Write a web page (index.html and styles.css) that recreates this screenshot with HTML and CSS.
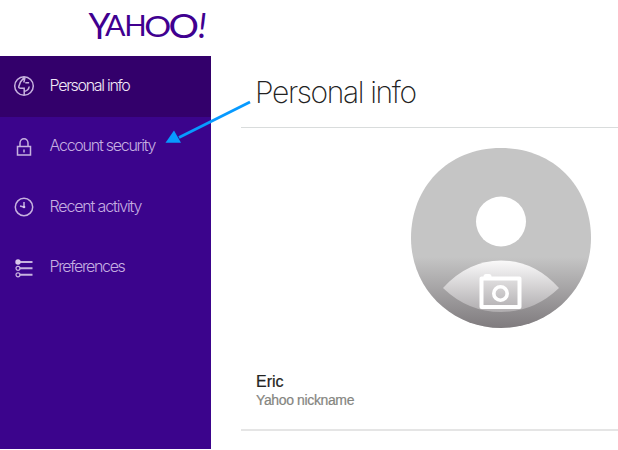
FILE: index.html
```html
<!DOCTYPE html>
<html lang="en">
<head>
<meta charset="utf-8">
<title>Personal info</title>
<link rel="stylesheet" href="styles.css">
</head>
<body>
<header class="header">
  <svg class="logo" viewBox="0 0 124 40" role="img" aria-label="Yahoo!">
    <text><tspan x="6.500" y="32.500" font-size="36" textLength="22" lengthAdjust="spacingAndGlyphs">Y</tspan><tspan x="23" y="30" font-size="29" textLength="20.500" lengthAdjust="spacingAndGlyphs">A</tspan><tspan x="42.300" y="30" font-size="29" textLength="22.500" lengthAdjust="spacingAndGlyphs">H</tspan><tspan x="62.300" y="30.500" font-size="29.500" textLength="27" lengthAdjust="spacingAndGlyphs">O</tspan><tspan x="86.500" y="31.500" font-size="33" textLength="30.500" lengthAdjust="spacingAndGlyphs">O</tspan><tspan class="bang" x="116" y="32" font-size="34">!</tspan></text>
  </svg>
</header>
<div class="layout">
  <nav class="sidebar">
    <a class="item active">
      <svg class="icon" viewBox="0 0 24 24"><circle cx="12" cy="12" r="9.300"/><path d="M12.500 3 8.500 8 6.800 12.500q-.3 1.800 1.700 1.800h3.700v6.700M12.200 17.500q4.500-1 5-5M13.300 8.800h3.800M13 3.500 11.800 8.500"/></svg>
      <span class="label w-info">Personal info</span>
    </a>
    <a class="item">
      <svg class="icon" viewBox="0 0 24 24"><path d="M5.500 11.500h13v8.500h-13zM8 11.500V8a4 4.300 0 0 1 8 0v3.500M12 14.500v3"/></svg>
      <span class="label w-security">Account security</span>
    </a>
    <a class="item">
      <svg class="icon" viewBox="0 0 24 24"><circle cx="12" cy="12" r="8.700"/><path d="M12 7v5l-4-1"/><circle class="solid" cx="12" cy="12" r="1.300"/></svg>
      <span class="label w-activity">Recent activity</span>
    </a>
    <a class="item">
      <svg class="icon" viewBox="0 0 24 24"><path class="bars" d="M7.500 6h13M7.500 12.300h13M7.500 18.800h13"/><circle class="solid" cx="6" cy="6" r="2.700"/><circle class="ring" cx="6" cy="12.300" r="2"/><circle class="ring" cx="6" cy="18.800" r="2"/></svg>
      <span class="label w-prefs">Preferences</span>
    </a>
  </nav>
  <main class="content">
    <h1 class="title"><span>Personal info</span></h1>
    <section class="profile">
      <svg class="avatar" viewBox="0 0 182 182">
        <defs>
          <linearGradient id="shade" x1="0" y1="0" x2="0" y2="1">
            <stop offset="0" stop-color="#4b4449" stop-opacity="0"/>
            <stop offset="1" stop-color="#4b4449" stop-opacity=".58"/>
          </linearGradient>
          <clipPath id="round"><path d="M91 1C145 1 181 41 181 91 181 141 141 181 91 181S1 141 1 91C1 41 37 1 91 1Z"/></clipPath>
        </defs>
        <g clip-path="url(#round)">
          <path fill="#c5c5c5" d="M0 0h182v182H0z"/>
          <circle cx="91" cy="74.500" r="25" fill="#fff"/>
          <path fill="#fff" d="M33 141Q58 113.500 91 113.500T149 141Q124 165 91 165T33 141Z"/>
          <path fill="url(#shade)" d="M0 110h182v72H0z"/>
        </g>
        <path fill="none" stroke="#fff" stroke-width="4" stroke-linejoin="round" d="M71.500 131.500h38V160h-38z"/>
        <path fill="none" stroke="#fff" stroke-width="5" stroke-linecap="round" d="M76 129.500h3"/>
        <circle cx="90.500" cy="146.500" r="6.700" fill="none" stroke="#fff" stroke-width="3.600"/>
      </svg>
      <div class="name">Eric</div>
      <div class="caption">Yahoo nickname</div>
    </section>
  </main>
</div>
<svg class="pointer" viewBox="0 0 88 48"><path class="shaft" d="M85 3 14 38.500"/><path class="head" d="M.5 43.800 9 31.500 16 43.800Z"/></svg>
</body>
</html>
```

FILE: styles.css
```css
* { box-sizing: border-box; }

body {
  margin: 0;
  width: 618px;
  height: 450px;
  overflow: hidden;
  background: #fff;
  font-family: "Liberation Sans", sans-serif;
}

.header { height: 56px; padding: 6px 0 0 82px; }

.logo {
  display: block;
  width: 124px;
  height: 40px;
  overflow: visible;
  fill: #400090;
  font-family: Lato, sans-serif;
  font-weight: 400;
}

.bang { font-style: italic; }

.layout { display: flex; height: 393px; }

.sidebar { width: 211px; flex: none; background: #3b048c; }

.item {
  display: flex;
  align-items: center;
  height: 60.500px;
  padding: 0 0 3px 12px;
  color: #c5aee1;
}

.item.active { background: #33006b; color: #f0e8f6; }

.icon {
  width: 24px;
  height: 24px;
  margin-right: 13.500px;
  position: relative;
  top: 1.500px;
  fill: none;
  stroke: #c7b2df;
  stroke-width: 1.500;
}

.icon .solid { fill: #d9c8ea; stroke: none; }
.icon .bars { stroke-width: 2; }
.icon .ring { stroke-width: 1.200; }

.label {
  font: 300 16px/20px Inter, sans-serif;
  white-space: nowrap;
}

.w-info { letter-spacing: -1.300px; }
.w-security { letter-spacing: -1.250px; }
.w-activity { letter-spacing: -1.150px; }
.w-prefs { letter-spacing: -1.350px; }

.content { flex: 1; margin-left: 30px; }

.title {
  height: 72px;
  margin: 0;
  padding: 17px 0 0 14px;
  border-bottom: 1px solid #d9dcdc;
  color: #222;
  font: 200 30px/38px Inter, sans-serif;
  letter-spacing: -1.370px;
  white-space: nowrap;
}

.profile {
  height: 303px;
  padding: 19px 0 0 15px;
  border-bottom: 2px solid #e5e5e5;
}

.avatar { display: block; width: 182px; height: 182px; margin-left: 154px; }

.name {
  margin-top: 43px;
  color: #222;
  font-size: 16px;
  line-height: 20px;
  -webkit-text-stroke: .2px #222;
}

.caption {
  color: #85857f;
  font-size: 14px;
  line-height: 17px;
  letter-spacing: -.370px;
  -webkit-text-stroke: .2px #85857f;
}

.pointer {
  position: absolute;
  left: 165px;
  top: 99px;
  width: 88px;
  height: 48px;
}

.shaft { fill: none; stroke: #079aff; stroke-width: 2.800; }
.head { fill: #079aff; }
```
